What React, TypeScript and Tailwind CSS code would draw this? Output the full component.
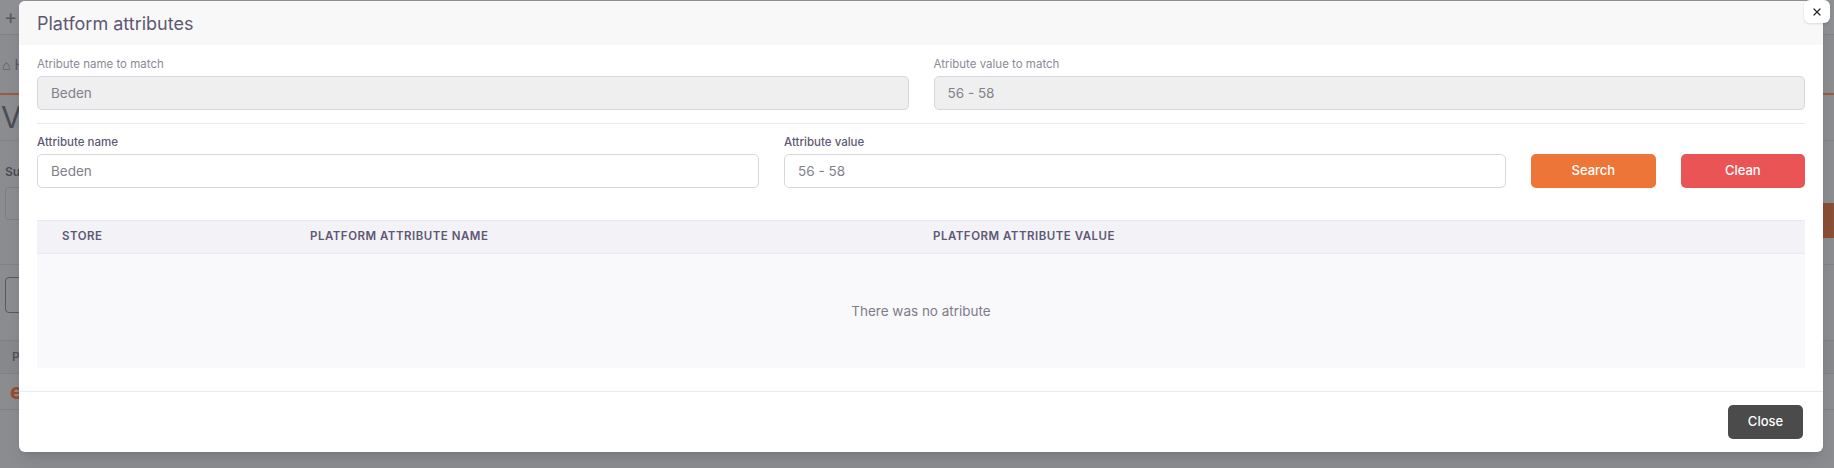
import React from 'react';
import { X } from 'lucide-react';

const font = "font-['Inter','Noto_Sans',sans-serif]";

// The dimmed page behind the modal (only its edges are visible)
const BackgroundPage: React.FC = () => (
  <div className="flex h-full w-full flex-col bg-[#8a8c8f] text-[#4a4d55]">
    <div className="flex h-[35px] items-center border-b border-[#7f8184] bg-[#8d8f92] px-1 text-[20px] leading-none text-[#55585e]">
      +
    </div>
    <div className="flex h-[60px] items-center border-b-2 border-[#9c5b3c] bg-[#8a8c8f]">
      <span className="pl-[2px] text-[14px] text-[#55585e]">⌂ H</span>
    </div>
    <div className="h-[45px] pl-[1px] pt-[2px] text-[30px] leading-[40px] text-[#4a4d55]">Var</div>
    <div className="flex flex-1 flex-col border-t border-[#818386]">
      <div className="flex items-start justify-between pt-[22px]">
        <div className="pl-[5px]">
          <div className="text-[12px] font-semibold text-[#4a4d55]">Su</div>
          <div className="mt-[6px] h-[33px] w-[40px] rounded border border-[#7c7e82]" />
        </div>
        <div className="mt-[40px] h-[35px] w-[30px] bg-[#8a4f36]" />
      </div>
      <div className="mt-[26px] border-t border-[#7f8184]" />
      <div className="mt-[12px] ml-[5px] h-[36px] w-[40px] rounded border border-[#55585e]" />
      <div className="mt-[27px] flex h-[34px] items-center border-y border-[#7f8184] bg-[#86888b] pl-[12px] text-[12px] font-semibold text-[#4f525a]">
        P
      </div>
      <div className="flex h-[36px] items-center border-b border-[#7f8184] pl-[10px] text-[22px] font-bold text-[#9a4a2c]">
        e
      </div>
    </div>
  </div>
);

const Label: React.FC<{ children: React.ReactNode; muted?: boolean }> = ({ children, muted }) => (
  <label
    className={
      muted
        ? 'mb-[4px] block text-[11.5px] leading-[16px] text-[#8b8a96]'
        : 'mb-[4px] block text-[11.5px] font-medium leading-[16px] text-[#5e5873]'
    }
  >
    {children}
  </label>
);

export default function App() {
  return (
    <div className={`relative h-[468px] w-[1834px] overflow-hidden ${font}`}>
      <BackgroundPage />

      {/* Modal */}
      <div className="absolute left-[19px] top-[1px] flex h-[451px] w-[1804px] flex-col rounded-md bg-white shadow-lg">
        <div className="flex h-[44px] items-center rounded-t-md bg-[#f8f8f8] px-[18px]">
          <h4 className="text-[18px] font-normal text-[#5e5873]">Platform attributes</h4>
        </div>

        <div className="flex flex-1 flex-col px-[18px] pt-[11px]">
          <div className="grid grid-cols-2 gap-x-[25px]">
            <div>
              <Label muted>Atribute name to match</Label>
              <div className="flex h-[34px] items-center rounded-[5px] border border-[#d8d6de] bg-[#efefef] px-[13px] text-[13.5px] text-[#82808c]">
                Beden
              </div>
            </div>
            <div>
              <Label muted>Atribute value to match</Label>
              <div className="flex h-[34px] items-center rounded-[5px] border border-[#d8d6de] bg-[#efefef] px-[13px] text-[13.5px] text-[#82808c]">
                56 - 58
              </div>
            </div>
          </div>

          <hr className="mt-[13px] border-[#ebe9f1]" />

          <div className="mt-[10px] grid grid-cols-12 items-end gap-x-[25px]">
            <div className="col-span-5">
              <Label>Attribute name</Label>
              <div className="flex h-[34px] items-center rounded-[5px] border border-[#d8d6de] bg-white px-[13px] text-[13.5px] text-[#82808c]">
                Beden
              </div>
            </div>
            <div className="col-span-5">
              <Label>Attribute value</Label>
              <div className="flex h-[34px] items-center rounded-[5px] border border-[#d8d6de] bg-white px-[13px] text-[13.5px] text-[#82808c]">
                56 - 58
              </div>
            </div>
            <button className="col-span-1 h-[34px] rounded-[5px] bg-[#ee7538] text-[13px] font-medium text-white">
              Search
            </button>
            <button className="col-span-1 h-[34px] rounded-[5px] bg-[#ea5455] text-[13px] font-medium text-white">
              Clean
            </button>
          </div>

          <div className="mt-[32px]">
            <div className="grid h-[34px] grid-cols-[248px_623px_1fr] items-center border-y border-[#ebe9f1] bg-[#f3f2f7] pl-[25px] text-[11.5px] font-semibold uppercase tracking-[0.5px] text-[#5e5873]">
              <span>Store</span>
              <span>Platform attribute name</span>
              <span>Platform attribute value</span>
            </div>
            <div className="flex h-[114px] items-center justify-center bg-[#f9f9fb] text-[13.5px] text-[#7f7c8a]">
              There was no atribute
            </div>
          </div>
        </div>

        <div className="flex h-[61px] items-center justify-end border-t border-[#ebe9f1] px-[20px]">
          <button className="h-[34px] w-[75px] rounded-[5px] bg-[#4b4b4b] text-[13px] font-medium text-white">
            Close
          </button>
        </div>

        {/* close X, sits over the corner */}
        <button className="absolute right-[-7px] top-[-1px] flex h-[23px] w-[26px] items-center justify-center rounded-md bg-white shadow-sm">
          <X size={12} strokeWidth={2.5} className="text-[#2b2b2b]" />
        </button>
      </div>
    </div>
  );
}
